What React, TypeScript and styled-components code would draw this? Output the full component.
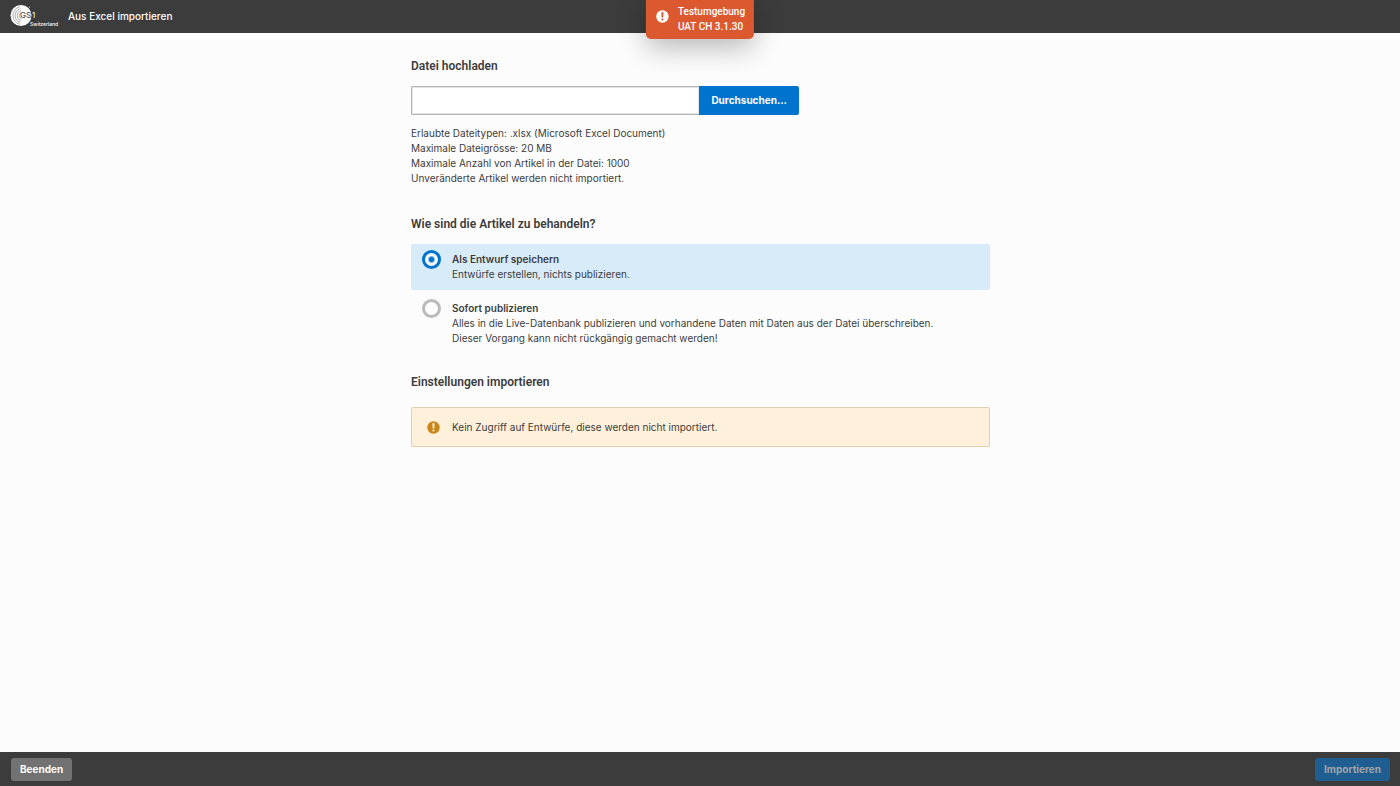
import React, { useRef, useState } from "react";
import styled, { createGlobalStyle } from "styled-components";

const GlobalStyle = createGlobalStyle`
  *, *::before, *::after { box-sizing: border-box; }
  body {
    margin: 0;
    background: #fcfcfc;
    color: #3c3c3c;
    font-family: Inter, "Liberation Sans", sans-serif;
    font-size: 10px;
    line-height: 15px;
  }
  button, input { font: inherit; }
`;

const Page = styled.div`
  display: flex;
  flex-direction: column;
  min-height: 100vh;
`;

const TopBar = styled.header`
  position: relative;
  display: flex;
  align-items: center;
  gap: 8px;
  height: 33px;
  padding: 0 10px;
  background: #3c3c3c;
  color: #fff;
`;

const PageTitle = styled.h1`
  margin: 0;
  font-size: 10px;
  font-weight: 500;
  line-height: 15px;
`;

const EnvironmentBadge = styled.div`
  position: absolute;
  top: 0;
  left: 50%;
  transform: translateX(-50%);
  display: flex;
  gap: 9px;
  height: 39px;
  padding: 4px 9px 0 10px;
  border-radius: 0 0 5px 5px;
  background: #dc592f;
  box-shadow: 0 8px 28px rgba(0, 0, 0, 0.28);
  font-family: Roboto, "Liberation Sans", sans-serif;
  font-weight: 500;
  white-space: nowrap;

  svg { margin-top: 6px; }
`;

const Content = styled.main`
  flex: 1;
  width: 100%;
  max-width: 580px;
  margin: 0 auto;
  padding: 25px 0 0 1px;
`;

const Section = styled.section`
  margin-bottom: 20px;
`;

const Heading = styled.h2`
  margin: 0 0 12px;
  font-family: Roboto, "Liberation Sans", sans-serif;
  font-size: 12px;
  font-weight: 600;
  line-height: 16px;
`;

const FilePicker = styled.div`
  display: flex;
  width: 67%;
  height: 29px;
  margin-bottom: 11px;
`;

const FileName = styled.input`
  flex: 1;
  min-width: 0;
  padding: 0 8px;
  border: 1px solid #b4b4b4;
  border-right: 0;
  border-radius: 2px 0 0 2px;
  background: #fff;
  box-shadow: inset 0 0 0 1px #e4e4e4;
`;

const BrowseButton = styled.button`
  padding: 0 12px;
  border: 0;
  border-radius: 0 2px 2px 0;
  background: #0073ce;
  color: #fff;
  font-weight: 700;
`;

const Hints = styled.div`
  padding-bottom: 10px;
`;

const Option = styled.label<{ $selected: boolean }>`
  display: flex;
  gap: 11px;
  margin-bottom: 3px;
  padding: 8px 11px;
  border-radius: 2px;
  background: ${(p) => (p.$selected ? "#d8ebf9" : "transparent")};
`;

const Radio = styled.input`
  appearance: none;
  flex: none;
  width: 19px;
  height: 19px;
  margin: -2px 0 0;
  border: 3px solid #bbb;
  border-radius: 50%;
  background: #fff;

  &:checked {
    border-color: #0073ce;
    background: radial-gradient(circle, #0073ce 2px, #fff 4px);
  }
`;

const OptionText = styled.span`
  display: block;
`;

const OptionTitle = styled.strong`
  display: block;
  font-weight: 600;
`;

const Notice = styled.div`
  display: flex;
  align-items: center;
  gap: 12px;
  min-height: 40px;
  margin-top: 17px;
  padding: 0 15px;
  border: 1px solid #e2cfae;
  border-radius: 2px;
  background: #fff0db;
`;

const BottomBar = styled.footer`
  display: flex;
  align-items: center;
  justify-content: space-between;
  height: 34px;
  padding: 1px 10px 0 11px;
  background: #3c3c3c;
`;

const ActionButton = styled.button<{ $primary?: boolean }>`
  height: 23px;
  padding: 0 9px;
  border: 0;
  border-radius: 3px;
  background: ${(p) => (p.$primary ? "#1e5e91" : "#727272")};
  color: ${(p) => (p.$primary ? "#a0a5a9" : "#fff")};
  font-weight: 700;
`;

function AlertIcon({ color, mark }: { color: string; mark: string }) {
  return (
    <svg width="13" height="13" viewBox="0 0 13 13" aria-hidden="true">
      <circle cx="6.5" cy="6.5" r="6.2" fill={color} />
      <path d="M5.4 2.3h2.2l-.3 5.2H5.7z" fill={mark} />
      <circle cx="6.5" cy="9.5" r="1.1" fill={mark} />
    </svg>
  );
}

function Logo() {
  return (
    <svg width="50" height="33" viewBox="0 0 50 33" role="img" aria-label="GS1 Switzerland">
      <circle cx="11" cy="15.5" r="10.5" fill="#fff" />
      <g fill="none" stroke="#777" strokeWidth="0.6">
        <path d="M10 6.7a9 9 0 0 0 0 17.6" />
        <path d="M10.5 8.7a7 7 0 0 0 0 13.6" />
        <path d="M11 10.4a5.3 5.3 0 0 0 0 10.2" />
        <path d="M11.5 12.2a3.6 3.6 0 0 0 0 6.6" />
      </g>
      <text x="10" y="18" fontSize="8" fontWeight="500" fill="#555">GS</text>
      <text x="22" y="18" fontSize="8" fill="#fff">1</text>
      <circle cx="19.5" cy="7" r="0.6" fill="#ddd" />
      <text x="20" y="26" fontSize="5" fontWeight="500" fill="#fff">Switzerland</text>
    </svg>
  );
}

export default function App() {
  const [mode, setMode] = useState("draft");
  const [fileName, setFileName] = useState("");
  const picker = useRef<HTMLInputElement>(null);

  return (
    <>
      <GlobalStyle />
      <Page>
        <TopBar>
          <Logo />
          <PageTitle>Aus Excel importieren</PageTitle>
          <EnvironmentBadge>
            <AlertIcon color="#fff" mark="#dc592f" />
            <div>
              Testumgebung
              <br />
              UAT CH 3.1.30
            </div>
          </EnvironmentBadge>
        </TopBar>

        <Content>
          <Section>
            <Heading>Datei hochladen</Heading>
            <FilePicker>
              <FileName type="text" readOnly aria-label="Datei hochladen" value={fileName} />
              <BrowseButton type="button" onClick={() => picker.current?.click()}>
                Durchsuchen...
              </BrowseButton>
              <input
                ref={picker}
                type="file"
                accept=".xlsx"
                hidden
                onChange={(e) => setFileName(e.target.files?.[0]?.name ?? "")}
              />
            </FilePicker>
            <Hints>
              Erlaubte Dateitypen: .xlsx (Microsoft Excel Document)
              <br />
              Maximale Dateigrösse: 20 MB
              <br />
              Maximale Anzahl von Artikel in der Datei: 1000
              <br />
              Unveränderte Artikel werden nicht importiert.
            </Hints>
          </Section>

          <Section>
            <Heading>Wie sind die Artikel zu behandeln?</Heading>
            <Option $selected={mode === "draft"}>
              <Radio type="radio" name="mode" checked={mode === "draft"} onChange={() => setMode("draft")} />
              <OptionText>
                <OptionTitle>Als Entwurf speichern</OptionTitle>
                Entwürfe erstellen, nichts publizieren.
              </OptionText>
            </Option>
            <Option $selected={mode === "publish"}>
              <Radio type="radio" name="mode" checked={mode === "publish"} onChange={() => setMode("publish")} />
              <OptionText>
                <OptionTitle>Sofort publizieren</OptionTitle>
                Alles in die Live-Datenbank publizieren und vorhandene Daten mit Daten aus der Datei überschreiben.
                <br />
                Dieser Vorgang kann nicht rückgängig gemacht werden!
              </OptionText>
            </Option>
          </Section>

          <Section>
            <Heading>Einstellungen importieren</Heading>
            <Notice>
              <AlertIcon color="#c98517" mark="#fff0db" />
              Kein Zugriff auf Entwürfe, diese werden nicht importiert.
            </Notice>
          </Section>
        </Content>

        <BottomBar>
          <ActionButton type="button">Beenden</ActionButton>
          <ActionButton type="button" $primary disabled>
            Importieren
          </ActionButton>
        </BottomBar>
      </Page>
    </>
  );
}
